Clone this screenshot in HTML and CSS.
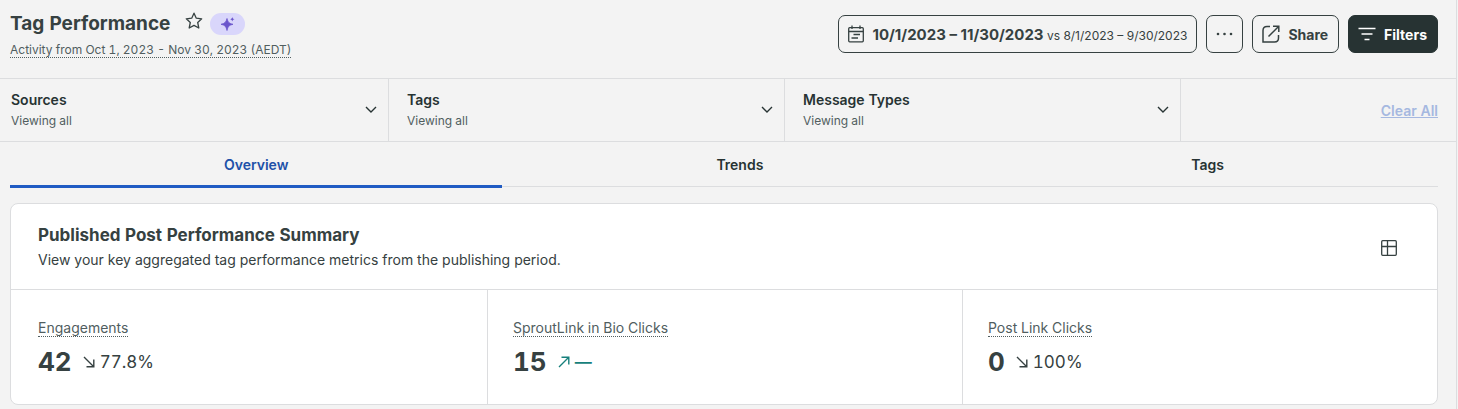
FILE: index.html
```html
<!DOCTYPE html>
<html lang="en">
<head>
    <meta charset="UTF-8">
    <meta name="viewport" content="width=device-width, initial-scale=1.0">
    <title>Tag Performance</title>
    <link rel="stylesheet" href="styles.css">
</head>
<body>
    <div class="report">
        <header class="header">
            <div class="heading">
                <div class="title-row">
                    <h1>Tag Performance</h1>
                    <button class="star-btn" aria-label="Add to favorites">
                        <svg width="18" height="18" viewBox="0 0 18 18" fill="none" stroke="currentColor" stroke-width="1.3" stroke-linejoin="round"><path d="M9 1.2l2.3 5 5.4.6-4 3.7 1.1 5.5L9 13.4l-4.8 2.6 1.1-5.5-4-3.7 5.4-.6z"/></svg>
                    </button>
                    <button class="ai-btn" aria-label="AI insights">
                        <svg width="14" height="14" viewBox="0 0 14 14" fill="currentColor"><path d="M6 1.5C7 5.300 8 6.300 12 7.300 8 8.300 7 9.300 6 13.500 5 9.300 4 8.300 0 7.300 4 6.300 5 5.300 6 1.500z" stroke="currentColor" stroke-width=".8" stroke-linejoin="round"/><path d="M11.300 0c.4 1.500.8 1.900 2.300 2.300-1.500.4-1.900.8-2.300 2.300-.4-1.500-.8-1.900-2.300-2.300 1.500-.4 1.900-.8 2.300-2.300z"/></svg>
                    </button>
                </div>
                <span class="activity">Activity from Oct 1, 2023 - Nov 30, 2023 (AEDT)</span>
            </div>
            <div class="actions">
                <button class="btn date-btn">
                    <svg width="16" height="18" viewBox="0 0 16 18" fill="none" stroke="currentColor" stroke-width="1.3"><rect x=".7" y="2.7" width="14.6" height="14.1" rx="1"/><path d="M.7 6.500h14.600M4 .5v3.500M12 .5v3.500M5.500 9.500h6.500M3.500 13h6.500"/></svg>
                    <span><strong>10/1/2023 – 11/30/2023</strong> vs 8/1/2023 – 9/30/2023</span>
                </button>
                <button class="btn more-btn" aria-label="More">
                    <svg width="17" height="4" viewBox="0 0 17 4" fill="currentColor"><circle cx="2" cy="2" r="1.3"/><circle cx="8.5" cy="2" r="1.3"/><circle cx="15" cy="2" r="1.3"/></svg>
                </button>
                <button class="btn">
                    <svg width="18" height="18" viewBox="0 0 18 18" fill="none" stroke="currentColor" stroke-width="1.5"><path d="M8 1.500H5Q1 1.500 1 5.500V17h11.500q4 0 4-4v-3M6.500 11.500L16.300 1.700M11 1.200h5.800V7"/></svg>
                    Share
                </button>
                <button class="btn filters-btn">
                    <svg width="18" height="14" viewBox="0 0 18 14" fill="none" stroke="currentColor" stroke-width="1.5"><path d="M.5 1.500h17M3.500 7h11M6.500 12.500h5"/></svg>
                    Filters
                </button>
            </div>
        </header>

        <div class="filter-bar">
            <button class="filter">
                <span><strong>Sources</strong>Viewing all</span>
                <svg width="12" height="8" viewBox="0 0 12 8" fill="none" stroke="currentColor" stroke-width="1.4"><path d="M1 1l5 5 5-5"/></svg>
            </button>
            <button class="filter">
                <span><strong>Tags</strong>Viewing all</span>
                <svg width="12" height="8" viewBox="0 0 12 8" fill="none" stroke="currentColor" stroke-width="1.4"><path d="M1 1l5 5 5-5"/></svg>
            </button>
            <button class="filter">
                <span><strong>Message Types</strong>Viewing all</span>
                <svg width="12" height="8" viewBox="0 0 12 8" fill="none" stroke="currentColor" stroke-width="1.4"><path d="M1 1l5 5 5-5"/></svg>
            </button>
            <div class="clear">
                <a href="#">Clear All</a>
            </div>
        </div>

        <nav class="tabs">
            <a href="#" class="tab active">Overview</a>
            <a href="#" class="tab">Trends</a>
            <a href="#" class="tab">Tags</a>
        </nav>

        <section class="card">
            <div class="card-header">
                <div>
                    <h2>Published Post Performance Summary</h2>
                    <p>View your key aggregated tag performance metrics from the publishing period.</p>
                </div>
                <button class="table-btn" aria-label="View as table">
                    <svg width="16" height="16" viewBox="0 0 16 16" fill="none" stroke="currentColor" stroke-width="1.3"><rect x=".7" y=".7" width="14.6" height="14.6" rx="1"/><path d="M.7 6.500h14.600M6.500.7v14.600"/></svg>
                </button>
            </div>
            <div class="metrics">
                <div class="metric">
                    <span class="metric-name">Engagements</span>
                    <div class="metric-row">
                        <span class="value">42</span>
                        <span class="change">
                            <svg width="12" height="12" viewBox="0 0 12 12" fill="none" stroke="currentColor" stroke-width="1.4"><path d="M1 1l9.500 9.500M3.500 10.800h7.300V3.500"/></svg>
                            77.8%
                        </span>
                    </div>
                </div>
                <div class="metric">
                    <span class="metric-name">SproutLink in Bio Clicks</span>
                    <div class="metric-row">
                        <span class="value">15</span>
                        <span class="change up">
                            <svg width="12" height="12" viewBox="0 0 12 12" fill="none" stroke="currentColor" stroke-width="1.4"><path d="M1 11l9.500-9.500M3.500 1.200h7.300v7.300"/></svg>
                            —
                        </span>
                    </div>
                </div>
                <div class="metric">
                    <span class="metric-name">Post Link Clicks</span>
                    <div class="metric-row">
                        <span class="value">0</span>
                        <span class="change">
                            <svg width="12" height="12" viewBox="0 0 12 12" fill="none" stroke="currentColor" stroke-width="1.4"><path d="M1 1l9.500 9.500M3.500 10.800h7.300V3.500"/></svg>
                            100%
                        </span>
                    </div>
                </div>
            </div>
        </section>
    </div>
</body>
</html>
```
FILE: styles.css
```css
* {
    box-sizing: border-box;
}
body {
    margin: 0;
    background: #f3f3f3;
    color: #364141;
    font-family: Inter, "Liberation Sans", sans-serif;
    font-size: 14px;
    font-variant-numeric: tabular-nums;
}
button {
    font: inherit;
    color: inherit;
    background: none;
    border: none;
    padding: 0;
    cursor: pointer;
}
svg {
    display: block;
    flex: none;
}
h1, h2, p {
    margin: 0;
}
.report {
    min-height: 100vh;
    margin-right: 1px;
    border-right: 1px solid #dcdddf;
}

/* header */
.header {
    display: flex;
    justify-content: space-between;
    padding: 11px 18px 20px 10px;
}
.title-row {
    display: flex;
    align-items: center;
    height: 26px;
}
h1 {
    font-size: 19px;
    line-height: 26px;
    font-weight: 700;
}
.star-btn {
    margin: 0 7px 6px 15px;
}
.ai-btn {
    display: flex;
    align-items: center;
    justify-content: center;
    width: 35px;
    height: 22px;
    border-radius: 11px;
    background: #d9d6fb;
    color: #6b55cc;
}
.activity {
    display: inline-block;
    margin-top: 5px;
    border-bottom: 1px dotted #515e5f;
    color: #515e5f;
    font-size: 12px;
    line-height: 15px;
}
.actions {
    display: flex;
    gap: 9px;
    padding-top: 4px;
}
.btn {
    display: flex;
    align-items: center;
    gap: 8px;
    height: 38px;
    padding: 0 10px 0 9px;
    border: 1px solid #364141;
    border-radius: 7px;
    font-weight: 700;
    white-space: nowrap;
}
.date-btn {
    padding: 0 9px;
    font-size: 12px;
    font-weight: 400;
    font-variant-numeric: normal;
}
.date-btn strong {
    font-size: 15px;
}
.more-btn {
    padding: 0 9px;
}
.filters-btn {
    background: #273333;
    border-color: #273333;
    color: #fff;
}

/* filter bar */
.filter-bar {
    display: flex;
    border-top: 1px solid #dcdddf;
    border-bottom: 1px solid #dcdddf;
}
.filter {
    box-sizing: content-box;
    display: flex;
    flex: 1 1 0;
    align-items: center;
    justify-content: space-between;
    height: 62px;
    padding: 0 11px 0 18px;
    border-right: 1px solid #dcdddf;
    text-align: left;
    font-size: 12px;
    line-height: 20px;
    color: #515e5f;
}
.filter:first-child {
    padding-left: 11px;
}
.filter strong {
    display: block;
    margin-bottom: 1px;
    font-size: 14px;
    font-weight: 600;
    color: #273333;
}
.filter svg {
    color: #273333;
}
.clear {
    display: flex;
    flex: 0 0 275px;
    align-items: center;
    justify-content: flex-end;
    padding-right: 18px;
}
.clear a {
    color: #a5b8e0;
    font-weight: 600;
}

/* tabs */
.tabs {
    display: flex;
    margin: 0 18px 16px 10px;
    border-bottom: 1px solid #dcdddf;
}
.tab {
    flex: 1 1 auto;
    height: 44px;
    line-height: 46px;
    text-align: center;
    text-decoration: none;
    font-weight: 600;
    color: #273333;
}
.tab.active {
    height: 46px;
    margin-bottom: -2px;
    border-bottom: 3px solid #205bc3;
    color: #2050a8;
}

/* summary card */
.card {
    margin: 0 18px 0 10px;
    background: #fff;
    border: 1px solid #dcdddf;
    border-radius: 8px;
}
.card-header {
    display: flex;
    align-items: center;
    justify-content: space-between;
    padding: 19px 40px 17px 27px;
    border-bottom: 1px solid #dcdddf;
}
h2 {
    font-size: 17px;
    line-height: 24px;
    font-weight: 700;
}
.card-header p {
    margin-top: 1px;
    font-size: 14px;
    line-height: 24px;
    font-variant-numeric: normal;
}
.metrics {
    display: flex;
}
.metric {
    box-sizing: content-box;
    flex: 1 1 0;
    padding: 29px 0 25px 25px;
    border-left: 1px solid #dcdddf;
}
.metric:first-child {
    padding-left: 27px;
    border-left: none;
}
.metric-name {
    display: inline-block;
    border-bottom: 1px dotted #515e5f;
    color: #515e5f;
    line-height: 16px;
}
.metric-row {
    display: flex;
    align-items: center;
    gap: 11px;
    margin-top: 8px;
}
.value {
    font-size: 26px;
    line-height: 34px;
    font-weight: 700;
}
.change {
    display: flex;
    align-items: center;
    gap: 5px;
    font-size: 17px;
}
.up {
    color: #17807c;
    font-weight: 600;
}
```
